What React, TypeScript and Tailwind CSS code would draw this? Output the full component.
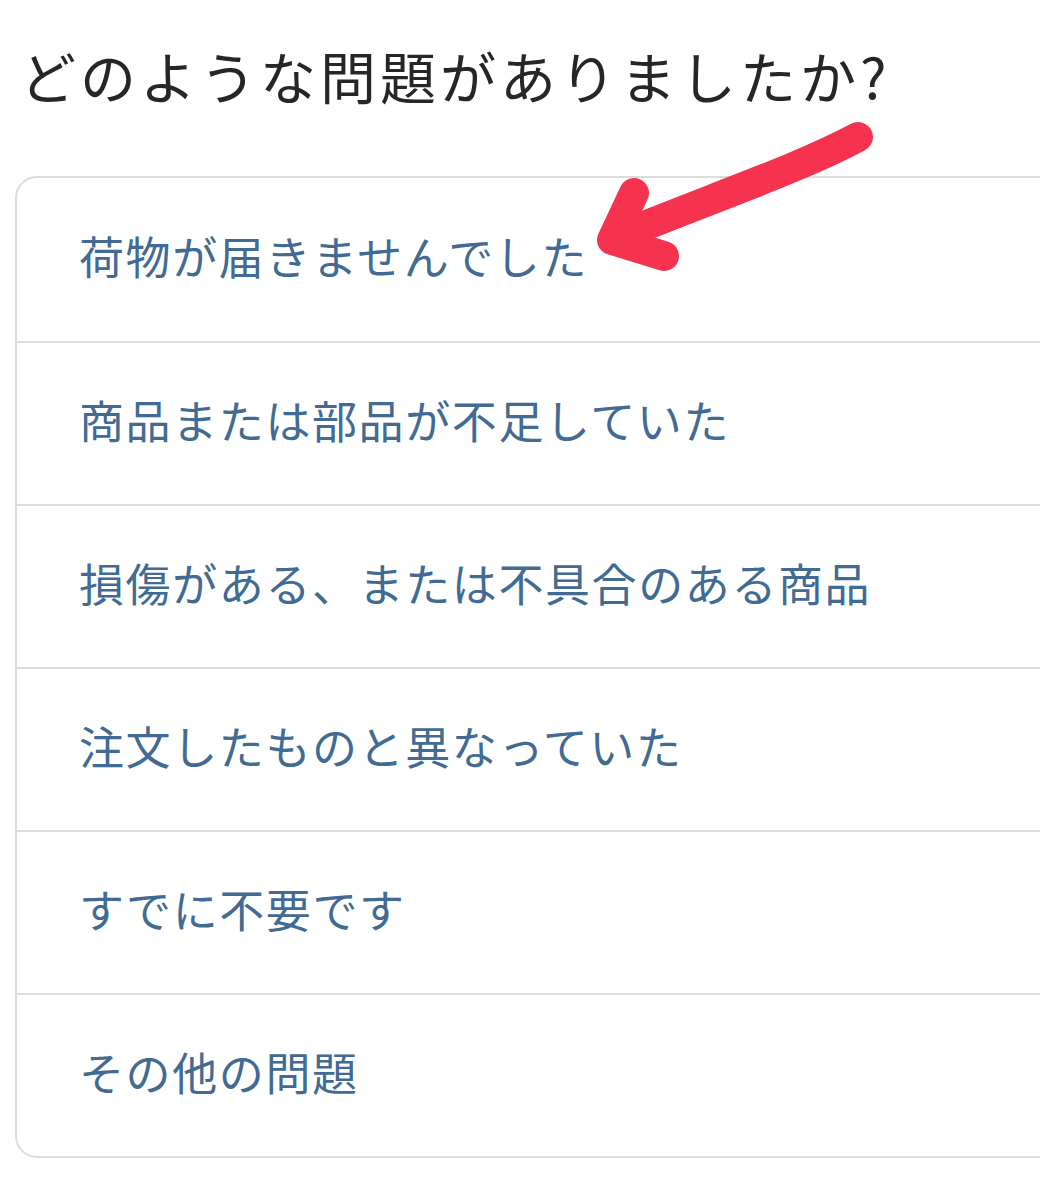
import React from 'react';

const options = [
    "荷物が届きませんでした",
    "商品または部品が不足していた",
    "損傷がある、または不具合のある商品",
    "注文したものと異なっていた",
    "すでに不要です",
    "その他の問題",
];

const App: React.FC = () => {
    return (
        <div
            className="relative w-[1040px] h-[1200px] overflow-hidden bg-white"
            style={{ fontFamily: '"Noto Sans CJK JP", "Noto Sans", sans-serif' }}
        >
            <h1 className="pl-[20px] pt-[35px] text-[56px] leading-[80px] font-normal text-[#262626] tracking-[4px]">
                どのような問題がありましたか?
            </h1>

            <div className="ml-[15px] mt-[61px] w-[1100px] border-2 border-[#dcdcdc] rounded-[22px] bg-white">
                {options.map((label, i) => (
                    <div
                        key={label}
                        className={`h-[163px] flex items-center pl-[62px] pb-[8px] ${i > 0 ? 'border-t-2 border-[#dcdcdc]' : ''}`}
                    >
                        <span className="text-[45px] text-[#416b92] tracking-[1.6px]">{label}</span>
                    </div>
                ))}
            </div>

            {/* red hand-drawn arrow */}
            <svg
                className="absolute left-0 top-0 pointer-events-none"
                width="1040"
                height="300"
                viewBox="0 0 1040 300"
            >
                <g fill="none" stroke="#f5334f" strokeWidth="30" strokeLinecap="round" strokeLinejoin="round">
                    <path d="M858 137 C 800 168, 720 195, 614 238" />
                    <path d="M634 193 L 612 240 L 664 256" />
                </g>
            </svg>
        </div>
    );
};

export default App;
